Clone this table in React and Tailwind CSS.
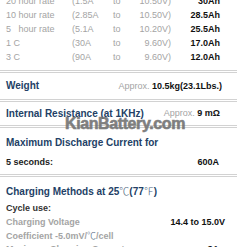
import React from "react";

const rates = [
  { label: "20 hour rate", amp: "(1.5A", volt: "10.50V)", cap: "30Ah" },
  { label: "10 hour rate", amp: "(2.85A", volt: "10.50V)", cap: "28.5Ah" },
  { label: "5   hour rate", amp: "(5.1A", volt: "10.20V)", cap: "25.5Ah" },
  { label: "1 C", amp: "(30A", volt: "9.60V)", cap: "17.0Ah" },
  { label: "3 C", amp: "(90A", volt: "9.60V)", cap: "12.0Ah" },
];

const Divider = () => (
  <div className="h-[3px] w-full border-y border-[#d2d2d2]" />
);

const Deg = ({ children }) => (
  <span className="font-['Noto_Sans_CJK_JP',serif] font-light text-[#4a5f7c]">{children}</span>
);

export default function App() {
  return (
    <div className="relative h-[247px] w-[247px] overflow-hidden bg-white font-['Liberation_Sans',Arial,sans-serif] leading-none">
      <div className="flex w-[237px] flex-col">
        {/* rate table */}
        <div className="-mt-[6px] flex flex-col text-[9px] text-[#a4a4a4]">
          {rates.map((r) => (
            <div key={r.label} className="flex h-[14px] items-center pl-[6px] pr-[17px]">
              <span className="w-[66px] whitespace-pre">{r.label}</span>
              <span className="w-[41px]">{r.amp}</span>
              <span className="w-[14px]">to</span>
              <span className="w-[44px] text-right">{r.volt}</span>
              <span className="flex-1 text-right font-bold text-[#111]">{r.cap}</span>
            </div>
          ))}
        </div>

        <div className="mt-[6px]">
          <Divider />
        </div>

        {/* weight */}
        <div className="flex h-[26px] items-center justify-between pl-[6px] pr-[15px]">
          <span className="text-[10px] font-bold text-[#233f66]">Weight</span>
          <span className="text-[9px]">
            <span className="text-[#a4a4a4]">Approx. </span>
            <span className="font-bold text-[#111]">10.5kg(23.1Lbs.)</span>
          </span>
        </div>

        <Divider />

        {/* internal resistance */}
        <div className="flex h-[23px] items-center justify-between pl-[6px] pr-[17px]">
          <span className="text-[10px] font-bold text-[#233f66]">Internal Resistance (at 1KHz)</span>
          <span className="text-[9px]">
            <span className="text-[#a4a4a4]">Approx. </span>
            <span className="font-bold text-[#111]">9 mΩ</span>
          </span>
        </div>

        <Divider />

        {/* discharge current */}
        <div className="flex flex-col pb-[3px] pt-[5px]">
          <div className="flex h-[20px] items-center pl-[6px] text-[10px] font-bold text-[#233f66]">
            Maximum Discharge Current for
          </div>
          <div className="flex h-[18px] items-center justify-between pl-[6px] pr-[18px] text-[9px] font-bold text-[#222]">
            <span>5 seconds:</span>
            <span className="text-[#111]">600A</span>
          </div>
        </div>

        <Divider />

        {/* charging methods */}
        <div className="mt-[4px] flex flex-col">
          <div className="flex h-[20px] items-center pl-[6px] text-[10px] font-bold text-[#233f66]">
            <span>
              Charging Methods at 25<Deg>℃</Deg>(77<Deg>℉</Deg>)
            </span>
          </div>
          <div className="flex h-[14px] items-center pl-[6px] text-[9px] font-bold text-[#333]">
            Cycle use:
          </div>
          <div className="flex h-[14px] items-center justify-between pl-[6px] pr-[12px] text-[9px] font-bold">
            <span className="text-[#a4a4a4]">Charging Voltage</span>
            <span className="text-[#111]">14.4 to 15.0V</span>
          </div>
          <div className="flex h-[13px] items-center pl-[6px] text-[9px] font-bold text-[#a4a4a4]">
            <span>
              Coefficient -5.0mV/<Deg>℃</Deg>/cell
            </span>
          </div>
          <div className="flex h-[14px] items-center justify-between pl-[6px] pr-[18px] text-[9px] font-bold">
            <span className="text-[#a4a4a4]">Maximum Charging Current</span>
            <span className="text-[#111]">3A</span>
          </div>
        </div>
      </div>

      {/* watermark over the content */}
      <div className="absolute left-[65px] top-[116px] text-[16px] font-bold leading-[16px] tracking-[-0.4px] text-[#727272] opacity-90 [-webkit-text-stroke:0.6px_#727272]">
        KianBattery.com
      </div>
    </div>
  );
}
